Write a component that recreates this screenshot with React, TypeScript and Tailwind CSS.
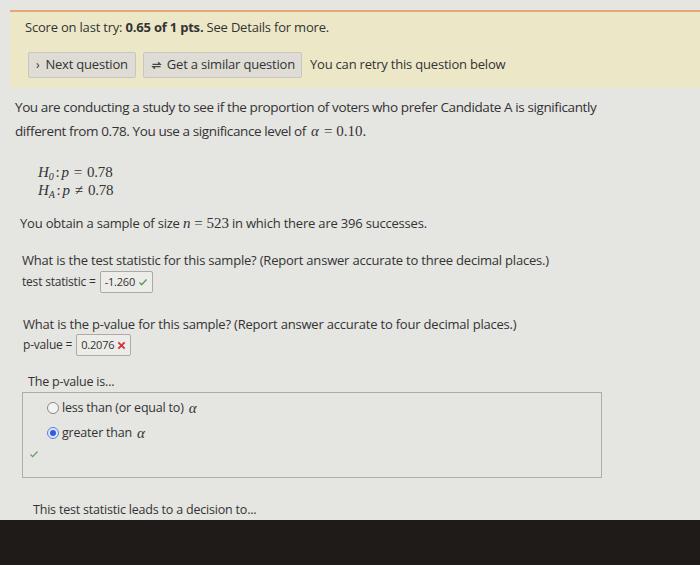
import React from "react";

const Alpha = () => (
  <span className="inline-block px-[2px] mr-[3px] leading-none font-['Liberation_Serif',serif] italic text-[15px] tracking-normal">α</span>
);

const Hyp = ({ sub, rel }: { sub: string; rel: string }) => (
  <div className="font-['Liberation_Serif',serif] text-[15px] leading-[18px] text-[#333]">
    <i>H</i>
    <sub className="text-[10px] italic">{sub}</sub>
    <span className="mx-[2px]">:</span>
    <i>p</i>
    <span className="mx-[5px]">{rel}</span>0.78
  </div>
);

export default function App() {
  return (
    <div className="w-[700px] h-[565px] overflow-hidden bg-[#e5e5e2] font-['Open_Sans',sans-serif] text-[#333] tracking-[-0.2px] flex flex-col">
      <div className="pt-[10px] pl-[10px]">
        <div className="bg-[#ece8c7] border-t-2 border-[#e2a878] h-[78px] pl-[15px] pt-[5px]">
          <p className="text-[13px] leading-[20px]">
            Score on last try: <b>0.65 of 1 pts.</b> See Details for more.
          </p>
          <div className="flex items-center gap-[7px] mt-[15px] ml-[3px]">
            <button className="h-[26px] px-[7px] bg-[#dedcd4] border border-[#c8c6be] rounded-[2px] text-[13px] flex items-center gap-[6px]">
              <span className="text-[12px]">›</span> Next question
            </button>
            <button className="h-[26px] px-[6px] bg-[#dedcd4] border border-[#c8c6be] rounded-[2px] text-[13px] flex items-center gap-[4px]">
              <svg width="13" height="13" viewBox="0 0 16 16" fill="none" stroke="#444" strokeWidth="1.6">
                <path d="M3 6.5h9.5l-2.5-2.5M13 9.5H3.5L6 12" />
              </svg>
              Get a similar question
            </button>
            <span className="text-[13px] ml-[1px]">You can retry this question below</span>
          </div>
        </div>
      </div>

      <div className="flex-1 pl-[15px] pt-[7px]">
        <p className="text-[13.5px] leading-[24px] w-[620px] tracking-[-0.4px]">
          You are conducting a study to see if the proportion of voters who prefer Candidate A is significantly different
          from 0.78. You use a significance level of <Alpha />
          <span className="inline-block leading-none font-['Liberation_Serif',serif] text-[15px] tracking-normal">= 0.10.</span>
        </p>

        <div className="ml-[23px] mt-[20px] flex flex-col">
          <Hyp sub="0" rel="=" />
          <Hyp sub="A" rel="≠" />
        </div>

        <p className="text-[13px] ml-[5px] mt-[14px] leading-[20px]">
          You obtain a sample of size <span className="inline-block leading-none font-['Liberation_Serif',serif] italic text-[15px] mr-[4px]">n</span>
          <span className="inline-block leading-none font-['Liberation_Serif',serif] text-[15px] tracking-normal mr-[3px]">= 523</span>in which there are 396 successes.
        </p>

        <p className="text-[13px] ml-[7px] mt-[17px] leading-[20px]">
          What is the test statistic for this sample? (Report answer accurate to three decimal places.)
        </p>
        <div className="ml-[7px] mt-[1px] flex items-center text-[12px]">
          test statistic =
          <span className="ml-[4px] h-[22px] px-[4px] border border-[#a9aaa4] rounded-[2px] bg-[#ecece8] flex items-center gap-[3px] text-[11px]">
            -1.260
            <svg width="10" height="10" viewBox="0 0 10 10" fill="none" stroke="#5b9a5b" strokeWidth="1.4">
              <path d="M1.5 5.5l2.2 2.2L8.5 2.5" />
            </svg>
          </span>
        </div>

        <p className="text-[13px] ml-[8px] mt-[21px] leading-[20px]">
          What is the p-value for this sample? (Report answer accurate to four decimal places.)
        </p>
        <div className="ml-[8px] flex items-center text-[12px]">
          p-value =
          <span className="ml-[4px] h-[22px] px-[4px] border border-[#b3a8a4] rounded-[2px] bg-[#ecece8] flex items-center gap-[3px] text-[11px]">
            0.2076
            <svg width="9" height="9" viewBox="0 0 10 10" fill="none" stroke="#d2333a" strokeWidth="2">
              <path d="M1.5 1.5l7 7M8.5 1.5l-7 7" />
            </svg>
          </span>
        </div>

        <p className="text-[12.5px] ml-[13px] mt-[17px] leading-[18px]">The p-value is...</p>
        <div className="ml-[7px] mt-[1px] w-[580px] h-[86px] border border-[#a8b0a4] pt-[3px] pl-[24px]">
          <label className="flex items-center gap-[3px] text-[12.5px] h-[24px]">
            <span className="w-[12px] h-[12px] rounded-full border border-[#888] bg-[#f4f4f2]" />
            less than (or equal to) <Alpha />
          </label>
          <label className="flex items-center gap-[3px] text-[12.5px] h-[24px] mt-[1px]">
            <span className="w-[12px] h-[12px] rounded-full border border-[#5b7de0] bg-[#dfe7fb] flex items-center justify-center">
              <span className="w-[6px] h-[6px] rounded-full bg-[#2f5fe0]" />
            </span>
            greater than <Alpha />
          </label>
          <svg className="-ml-[18px] mt-[4px]" width="10" height="10" viewBox="0 0 10 10" fill="none" stroke="#6a9a6a" strokeWidth="1.2">
            <path d="M1.5 5.5l2.2 2.2L8.5 2.5" />
          </svg>
        </div>

        <p className="text-[12.5px] ml-[18px] mt-[23px] leading-[18px]">This test statistic leads to a decision to...</p>
      </div>

      <div className="h-[45px] bg-[#1f1b19] shrink-0" />
    </div>
  );
}
